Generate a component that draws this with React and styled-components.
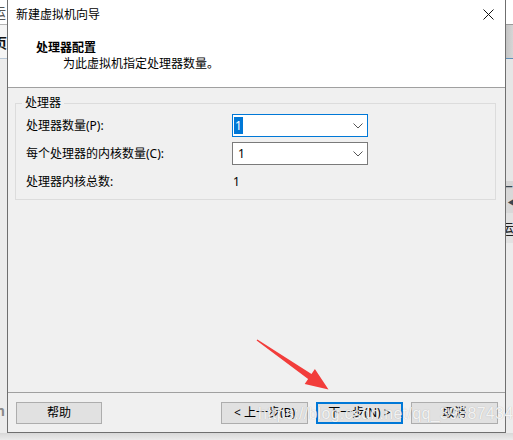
import styled, { createGlobalStyle } from 'styled-components'

const GlobalStyle = createGlobalStyle`
  html, body {
    margin: 0;
    padding: 0;
    background: #e8e8e8;
  }
  * {
    box-sizing: border-box;
  }
`

const uiFont = `"Noto Sans", "Noto Sans CJK SC", sans-serif`

const Page = styled.div`
  position: relative;
  width: 513px;
  height: 440px;
  overflow: hidden;
  display: flex;
  flex-direction: column;
  font-family: ${uiFont};
  font-size: 12px;
  color: #000;
`

const Desk = styled.div`
  display: flex;
  height: 433px;
`

const SideStrip = styled.div`
  width: ${p => p.$w}px;
  display: flex;
  flex-direction: column;
  overflow: hidden;
  background: #ececec;
`

const StripBlock = styled.div`
  height: ${p => p.$h}px;
  background: ${p => p.$bg};
  border-bottom: ${p => (p.$line ? `1px solid ${p.$line}` : 'none')};
  overflow: hidden;
  display: flex;
  align-items: center;
  justify-content: ${p => (p.$right ? 'flex-end' : 'flex-start')};
`

const Fragment = styled.span`
  font-family: "Noto Sans CJK SC", sans-serif;
  font-size: 14px;
  font-weight: ${p => (p.$bold ? 700 : 400)};
  color: ${p => p.$color || '#333'};
  margin-left: ${p => p.$shift || 0}px;
  line-height: 1;
  white-space: nowrap;
`

const Spacer = styled.div`
  flex: 1;
`

const BottomStrip = styled.div`
  height: 7px;
  background: linear-gradient(#d8d8d8, #ebebeb);
`

const Dialog = styled.div`
  width: 499px;
  height: 433px;
  display: flex;
  flex-direction: column;
  background: #f0f0f0;
  border: 1px solid #6f6f6f;
  border-top: none;
`

const TitleBar = styled.div`
  height: 30px;
  background: #fff;
  display: flex;
  align-items: center;
  justify-content: space-between;
  padding: 0 8px 0 8px;
`

const WindowTitle = styled.span`
  line-height: 16px;
`

const CloseBtn = styled.div`
  width: 12px;
  height: 12px;
  display: flex;
  margin-right: 2px;
`

const Header = styled.div`
  height: 58px;
  background: #fff;
  border-bottom: 1px solid #a0a0a0;
  display: flex;
  flex-direction: column;
  padding: 10px 0 0 28px;
`

const HeaderTitle = styled.div`
  font-weight: 700;
  line-height: 16px;
`

const HeaderSub = styled.div`
  line-height: 16px;
  margin-left: 27px;
`

const Body = styled.div`
  flex: 1;
  padding: 15px 9px 0 7px;
`

const GroupBox = styled.div`
  position: relative;
  border: 1px solid #dcdcdc;
  padding: 10px 0 6px 10px;
  display: grid;
  grid-template-columns: 206px 136px;
  grid-auto-rows: 23px;
  row-gap: 5px;
  align-items: center;
`

const Legend = styled.span`
  position: absolute;
  top: -9px;
  left: 6px;
  padding: 0 3px;
  background: #f0f0f0;
  line-height: 16px;
`

const FieldLabel = styled.span`
  line-height: 16px;
`

const Combo = styled.div`
  height: 23px;
  background: #fff;
  border: 1px solid ${p => (p.$focused ? '#0078d7' : '#7a7a7a')};
  display: flex;
  align-items: center;
  justify-content: space-between;
  padding: 0 4px 0 ${p => (p.$focused ? 1 : 4)}px;
`

const ComboValue = styled.span`
  line-height: 17px;
  padding: 0 1px;
  background: ${p => (p.$selected ? '#0078d7' : 'transparent')};
  color: ${p => (p.$selected ? '#fff' : '#000')};
`

const Value = styled.span`
  padding-left: 1px;
  line-height: 16px;
`

const Footer = styled.div`
  height: 40px;
  border-top: 1px solid #a0a0a0;
  display: flex;
  align-items: flex-start;
  padding: 9px 7px 0 8px;
  gap: 8px;
`

const Button = styled.div`
  width: ${p => (p.$w || 87)}px;
  height: 22px;
  background: #e1e1e1;
  border: ${p => (p.$default ? '2px solid #0078d7' : '1px solid #adadad')};
  display: flex;
  align-items: center;
  justify-content: center;
  line-height: 16px;
  margin-right: ${p => (p.$push ? 'auto' : 0)};
`

const Watermark = styled.div`
  position: absolute;
  left: 258px;
  top: 405px;
  font-family: "Liberation Sans", Arial, sans-serif;
  font-size: 16px;
  letter-spacing: 0.3px;
  color: rgba(255, 255, 255, 0.85);
  text-shadow: 0 0 1px rgba(0, 0, 0, 0.25);
  white-space: nowrap;
  pointer-events: none;
`

const ArrowLayer = styled.svg`
  position: absolute;
  left: 0;
  top: 0;
  pointer-events: none;
`

const Chevron = () => (
  <svg width="10" height="6" viewBox="0 0 10 6">
    <path d="M0.5 0.5 L5 5 L9.5 0.5" fill="none" stroke="#555" strokeWidth="1" />
  </svg>
)

const CloseIcon = () => (
  <svg width="11" height="11" viewBox="0 0 11 11">
    <path d="M0.5 0.5 L10.5 10.5 M10.5 0.5 L0.5 10.5" stroke="#111" strokeWidth="1" />
  </svg>
)

const App = () => {
  return (
    <>
      <GlobalStyle />
      <Page>
        <Desk>
          <SideStrip $w={7}>
            <StripBlock $h={25} $bg="#fff" $line="#b5b5b5">
              <Fragment $shift={-8} $color="#555">运</Fragment>
            </StripBlock>
            <StripBlock $h={34} $bg="#f5f5f5" $line="#b8c7d6">
              <Fragment $shift={-7} $bold $color="#111">页</Fragment>
            </StripBlock>
            <Spacer />
            <StripBlock $h={14} $bg="#ececec">
              <Fragment $shift={-4} $bold $color="#8a8a8a">n</Fragment>
            </StripBlock>
            <StripBlock $h={16} $bg="#ececec" />
          </SideStrip>

          <Dialog>
            <TitleBar>
              <WindowTitle>新建虚拟机向导</WindowTitle>
              <CloseBtn>
                <CloseIcon />
              </CloseBtn>
            </TitleBar>
            <Header>
              <HeaderTitle>处理器配置</HeaderTitle>
              <HeaderSub>为此虚拟机指定处理器数量。</HeaderSub>
            </Header>
            <Body>
              <GroupBox>
                <Legend>处理器</Legend>
                <FieldLabel>处理器数量(P):</FieldLabel>
                <Combo $focused>
                  <ComboValue $selected>1</ComboValue>
                  <Chevron />
                </Combo>
                <FieldLabel>每个处理器的内核数量(C):</FieldLabel>
                <Combo>
                  <ComboValue>1</ComboValue>
                  <Chevron />
                </Combo>
                <FieldLabel>处理器内核总数:</FieldLabel>
                <Value>1</Value>
              </GroupBox>
            </Body>
            <Footer>
              <Button $w={86} $push>帮助</Button>
              <Button>&lt; 上一步(B)</Button>
              <Button $default>下一步(N) &gt;</Button>
              <Button>取消</Button>
            </Footer>
          </Dialog>

          <SideStrip $w={7}>
            <StripBlock $h={25} $bg="#fff" $line="#9a9a9a" />
            <StripBlock $h={34} $bg="linear-gradient(90deg, #c4c4c4, #d6d6d6)" $line="#5f8fb8" />
            <StripBlock $h={122} $bg="#e6e6e6" />
            <StripBlock $h={8} $bg="#d4d4d4" $right>
              <Fragment $color="#3c4650" $bold>—</Fragment>
            </StripBlock>
            <StripBlock $h={24} $bg="#d8d8d8">
              <Fragment $shift={1} $color="#3c4650" $bold>◀</Fragment>
            </StripBlock>
            <StripBlock $h={30} $bg="#e2e2e2">
              <Fragment $shift={-6} $color="#222">运</Fragment>
            </StripBlock>
            <Spacer />
          </SideStrip>
        </Desk>
        <BottomStrip />

        <Watermark>https://blog.csdn.net/qq_39887434</Watermark>
        <ArrowLayer width="513" height="440" viewBox="0 0 513 440">
          <polygon
            points="257.4,339.4 311.5,374.0 314.9,369.1 328.5,389.5 304.7,383.9 308.1,379.0 256.6,340.6"
            fill="#f23d3b"
          />
        </ArrowLayer>
      </Page>
    </>
  )
}

export default App
